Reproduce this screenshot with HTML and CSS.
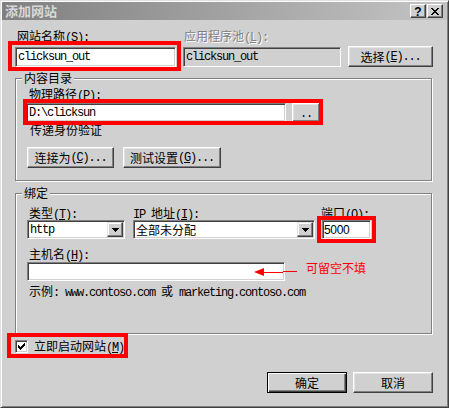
FILE: index.html
```html
<!DOCTYPE html>
<html lang="zh-CN">
<head>
<meta charset="utf-8">
<title>添加网站</title>
<link rel="stylesheet" href="styles.css">
</head>
<body>
<div class="window">
  <div class="titlebar">
    <span class="title">添加网站</span>
    <div class="tb-buttons">
      <span class="tb-btn tb-help">?</span>
      <span class="tb-btn tb-close"><svg width="8" height="7" viewBox="0 0 8 7" shape-rendering="crispEdges"><path d="M0 0h2v1h-2z M6 0h2v1h-2z M1 1h2v1h-2z M5 1h2v1h-2z M2 2h4v1h-4z M3 3h2v1h-2z M2 4h4v1h-4z M1 5h2v1h-2z M5 5h2v1h-2z M0 6h2v1h-2z M6 6h2v1h-2z" fill="#000"/></svg></span>
    </div>
  </div>

  <div class="content">
    <div class="site-row">
      <label class="lbl lbl-name">网站名称<span class="m">(<u>S</u>):</span></label>
      <label class="lbl lbl-pool">应用程序池<span class="m">(<u>L</u>):</span></label>
      <span></span>
      <div class="field"><span class="m">clicksun_out</span></div>
      <div class="field field-disabled"><span class="m">clicksun_out</span></div>
      <button class="btn btn-select">选择<span class="m">(<u>E</u>)...</span></button>
    </div>

    <div class="group group-content">
      <span class="legend">内容目录</span>
      <label class="lbl lbl-path">物理路径<span class="m">(<u>P</u>):</span></label>
      <div class="path-row">
        <div class="field field-path"><span class="m">D:\clicksun</span></div>
        <button class="btn btn-browse"><span class="m dots">..</span></button>
      </div>
      <div class="lbl lbl-auth">传递身份验证</div>
      <div class="btn-row">
        <button class="btn btn-connect">连接为<span class="m">(<u>C</u>)...</span></button>
        <button class="btn btn-test">测试设置<span class="m">(<u>G</u>)...</span></button>
      </div>
    </div>

    <div class="group group-bind">
      <span class="legend">绑定</span>
      <div class="bind-grid">
        <label class="lbl lbl-type">类型<span class="m">(<u>T</u>):</span></label>
        <label class="lbl lbl-ip"><span class="m">IP </span>地址<span class="m">(<u>I</u>):</span></label>
        <label class="lbl lbl-port">端口<span class="m">(<u>O</u>):</span></label>
        <div class="select select-type">
          <span class="m">http</span>
          <span class="drop"><svg width="7" height="4" viewBox="0 0 7 4" shape-rendering="crispEdges"><path d="M0 0h7v1h-7z M1 1h5v1h-5z M2 2h3v1h-3z M3 3h1v1h-1z" fill="#000"/></svg></span>
        </div>
        <div class="select select-ip">
          <span>全部未分配</span>
          <span class="drop"><svg width="7" height="4" viewBox="0 0 7 4" shape-rendering="crispEdges"><path d="M0 0h7v1h-7z M1 1h5v1h-5z M2 2h3v1h-3z M3 3h1v1h-1z" fill="#000"/></svg></span>
        </div>
        <div class="field field-port"><span class="num">5000</span></div>
      </div>
      <label class="lbl lbl-host">主机名<span class="m">(<u>H</u>):</span></label>
      <div class="host-row">
        <div class="field field-host"></div>
        <span class="note">可留空不填</span>
      </div>
      <div class="lbl lbl-example">示例<span class="m">: www.contoso.com </span>或<span class="m"> marketing.contoso.com</span></div>
    </div>

    <div class="check-row">
      <span class="checkbox"><svg width="7" height="7" viewBox="0 0 7 7" shape-rendering="crispEdges"><path d="M6 0h1v1h-1z M5 1h2v1h-2z M0 2h1v1h-1z M4 2h3v1h-3z M0 3h2v1h-2z M3 3h3v1h-3z M0 4h5v1h-5z M1 5h3v1h-3z M2 6h1v1h-1z" fill="#000"/></svg></span>
      <span class="check-label">立即启动网站<span class="m">(<u>M</u>)</span></span>
    </div>

    <div class="dialog-buttons">
      <button class="btn btn-dialog btn-default">确定</button>
      <button class="btn btn-dialog">取消</button>
    </div>
  </div>

  <div class="mark mark-name"></div>
  <div class="mark mark-path"></div>
  <div class="mark mark-port"></div>
  <div class="mark mark-check"></div>
  <svg class="arrow" width="48" height="14" viewBox="0 0 48 14" shape-rendering="crispEdges">
    <polygon points="2,7 12,3 12,11" fill="#f00" shape-rendering="auto"/>
    <rect x="12" y="7" width="19" height="1" fill="#f00"/>
    <rect x="31" y="6" width="14" height="1" fill="#f00"/>
  </svg>
</div>
</body>
</html>
```

FILE: styles.css
```css
* {
  box-sizing: border-box;
}

html,
body {
  margin: 0;
  padding: 0;
}

body {
  width: 449px;
  height: 408px;
  overflow: hidden;
  background: #d0d0d0;
  font-family: "Noto Sans CJK SC", "Liberation Sans", sans-serif;
  font-size: 12px;
  color: #000;
}

.m {
  font-family: "Liberation Mono", "DejaVu Sans Mono", monospace;
  font-size: 12px;
  letter-spacing: -1.2px;
  white-space: pre;
}

u {
  text-decoration: underline;
  text-underline-offset: 1px;
}

/* window frame */
.window {
  width: 449px;
  height: 408px;
  border: 1px solid;
  border-color: #e0e0e0 #404040 #404040 #e0e0e0;
  padding: 1px;
  background: #d0d0d0;
  box-shadow: inset 1px 1px 0 #fff, inset -1px -1px 0 #808080;
}

.titlebar {
  height: 18px;
  display: flex;
  align-items: center;
  justify-content: space-between;
  padding: 0 4px 0 3px;
  background: linear-gradient(to right, #808080, #c4c4c4);
}

.title {
  font-weight: bold;
  font-size: 13px;
  line-height: 18px;
  color: #d8d8d8;
}

.tb-buttons {
  display: flex;
  gap: 1px;
}

.tb-btn {
  width: 16px;
  height: 14px;
  display: flex;
  align-items: center;
  justify-content: center;
  background: #d0d0d0;
  border: 1px solid;
  border-color: #fff #404040 #404040 #fff;
  box-shadow: inset -1px -1px 0 #808080;
}

.tb-help {
  font: bold 12px/12px "Liberation Sans", sans-serif;
  padding-top: 1px;
}

/* content */
.content {
  padding: 11px 14px 0 13px;
}

.lbl {
  display: block;
  height: 12px;
  line-height: 10px;
  white-space: nowrap;
}

.lbl .m {
  line-height: 10px;
}

.site-row {
  display: grid;
  grid-template-columns: 161px 158px 85px;
  grid-template-rows: 12px 20px;
  column-gap: 7px;
  row-gap: 4px;
}

.lbl-name {
  margin-left: 2px;
}

.lbl-pool {
  margin-left: 1px;
  color: #808080;
  text-shadow: 1px 1px 0 #fff;
}

.field {
  height: 20px;
  display: flex;
  align-items: center;
  padding: 0 2px;
  background: #fff;
  border: 1px solid;
  border-color: #808080 #fff #fff #808080;
  box-shadow: inset 1px 1px 0 #404040, inset -1px -1px 0 #d0d0d0;
  white-space: nowrap;
  overflow: hidden;
}

.field-disabled {
  background: #d0d0d0;
}

.btn {
  appearance: none;
  margin: 0;
  padding: 0;
  font: inherit;
  color: #000;
  height: 21px;
  display: flex;
  align-items: center;
  justify-content: center;
  white-space: nowrap;
  background: #d0d0d0;
  border: 1px solid;
  border-color: #fff #404040 #404040 #fff;
  box-shadow: inset -1px -1px 0 #808080, inset 1px 1px 0 #e4e4e4;
}

.btn-select {
  margin-top: -1px;
}

/* groups */
.group {
  width: 417px;
  border: 1px solid #808080;
  box-shadow: 1px 1px 0 #fff, inset 1px 1px 0 #fff;
  padding: 0 0 12px 10px;
}

.group-content {
  margin-top: 11px;
}

.group-bind {
  margin-top: 12px;
  padding-bottom: 35px;
}

.legend {
  display: block;
  width: max-content;
  height: 12px;
  line-height: 11px;
  margin: -7px 0 0 -4px;
  padding: 0 2px;
  background: #d0d0d0;
}

.lbl-path {
  margin: 5px 0 0 3px;
}

.path-row {
  display: flex;
  gap: 6px;
  margin-top: 2px;
  height: 19px;
}

.field-path {
  width: 260px;
  height: 19px;
}

.btn-browse {
  width: 28px;
  height: 19px;
  align-items: flex-end;
  padding-bottom: 2px;
}

.dots {
  line-height: 10px;
}

.lbl-auth {
  margin: 3px 0 0 4px;
}

.btn-row {
  display: flex;
  gap: 9px;
  margin: 10px 0 0 1px;
}

.btn-connect {
  width: 87px;
}

.btn-test {
  width: 98px;
}

/* binding */
.bind-grid {
  display: grid;
  grid-template-columns: 99px 182px 49px;
  grid-template-rows: 12px 19px;
  column-gap: 7px;
  margin: 9px 0 0 1px;
}

.lbl-type {
  margin-left: 2px;
}

.lbl-port {
  margin-left: -1px;
}

.select {
  height: 19px;
  display: flex;
  align-items: center;
  padding: 1px;
  background: #fff;
  border: 1px solid;
  border-color: #808080 #fff #fff #808080;
  box-shadow: inset 1px 1px 0 #404040, inset -1px -1px 0 #d0d0d0;
  white-space: nowrap;
}

.select > span:first-child {
  padding-left: 1px;
}

.select-type {
  width: 98px;
}

.drop {
  margin-left: auto;
  width: 16px;
  height: 15px;
  display: flex;
  align-items: center;
  justify-content: center;
  background: #d0d0d0;
  border: 1px solid;
  border-color: #e4e4e4 #404040 #404040 #e4e4e4;
  box-shadow: inset -1px -1px 0 #808080, inset 1px 1px 0 #fff;
}

.field-port {
  height: 19px;
  padding-left: 1px;
}

.num {
  font-family: "Liberation Sans", sans-serif;
  font-size: 12px;
  letter-spacing: -0.3px;
}

.lbl-host {
  margin: 10px 0 0 3px;
}

.host-row {
  display: flex;
  margin-top: 1px;
  height: 19px;
}

.field-host {
  width: 258px;
  height: 19px;
  margin-left: 1px;
}

.note {
  margin-left: 21px;
  line-height: 11px;
  color: #f00;
}

.lbl-example {
  margin: 5px 0 0 3px;
}

/* checkbox */
.check-row {
  display: flex;
  align-items: center;
  gap: 6px;
  margin-top: 6px;
  height: 13px;
}

.checkbox {
  width: 13px;
  height: 13px;
  display: flex;
  align-items: center;
  justify-content: center;
  background: #fff;
  border: 1px solid;
  border-color: #808080 #fff #fff #808080;
  box-shadow: inset 1px 1px 0 #404040, inset -1px -1px 0 #d0d0d0;
}

.check-label {
  line-height: 13px;
  white-space: nowrap;
}

.check-label .m {
  line-height: 13px;
}

/* dialog buttons */
.dialog-buttons {
  display: flex;
  justify-content: flex-end;
  gap: 6px;
  margin-top: 19px;
}

.btn-dialog {
  width: 80px;
}

.btn-default {
  border-color: #000;
  box-shadow: inset 1px 1px 0 #fff, inset -1px -1px 0 #404040, inset -2px -2px 0 #808080;
}

/* red annotation overlays */
.mark {
  position: absolute;
  border: 4px solid #f00;
  pointer-events: none;
}

.mark-name {
  left: 8px;
  top: 41px;
  width: 173px;
  height: 30px;
}

.mark-path {
  left: 23px;
  top: 99px;
  width: 300px;
  height: 26px;
}

.mark-port {
  left: 317px;
  top: 216px;
  width: 59px;
  height: 27px;
}

.mark-check {
  left: 7px;
  top: 333px;
  width: 121px;
  height: 25px;
}

.arrow {
  position: absolute;
  left: 252px;
  top: 265px;
}
```
